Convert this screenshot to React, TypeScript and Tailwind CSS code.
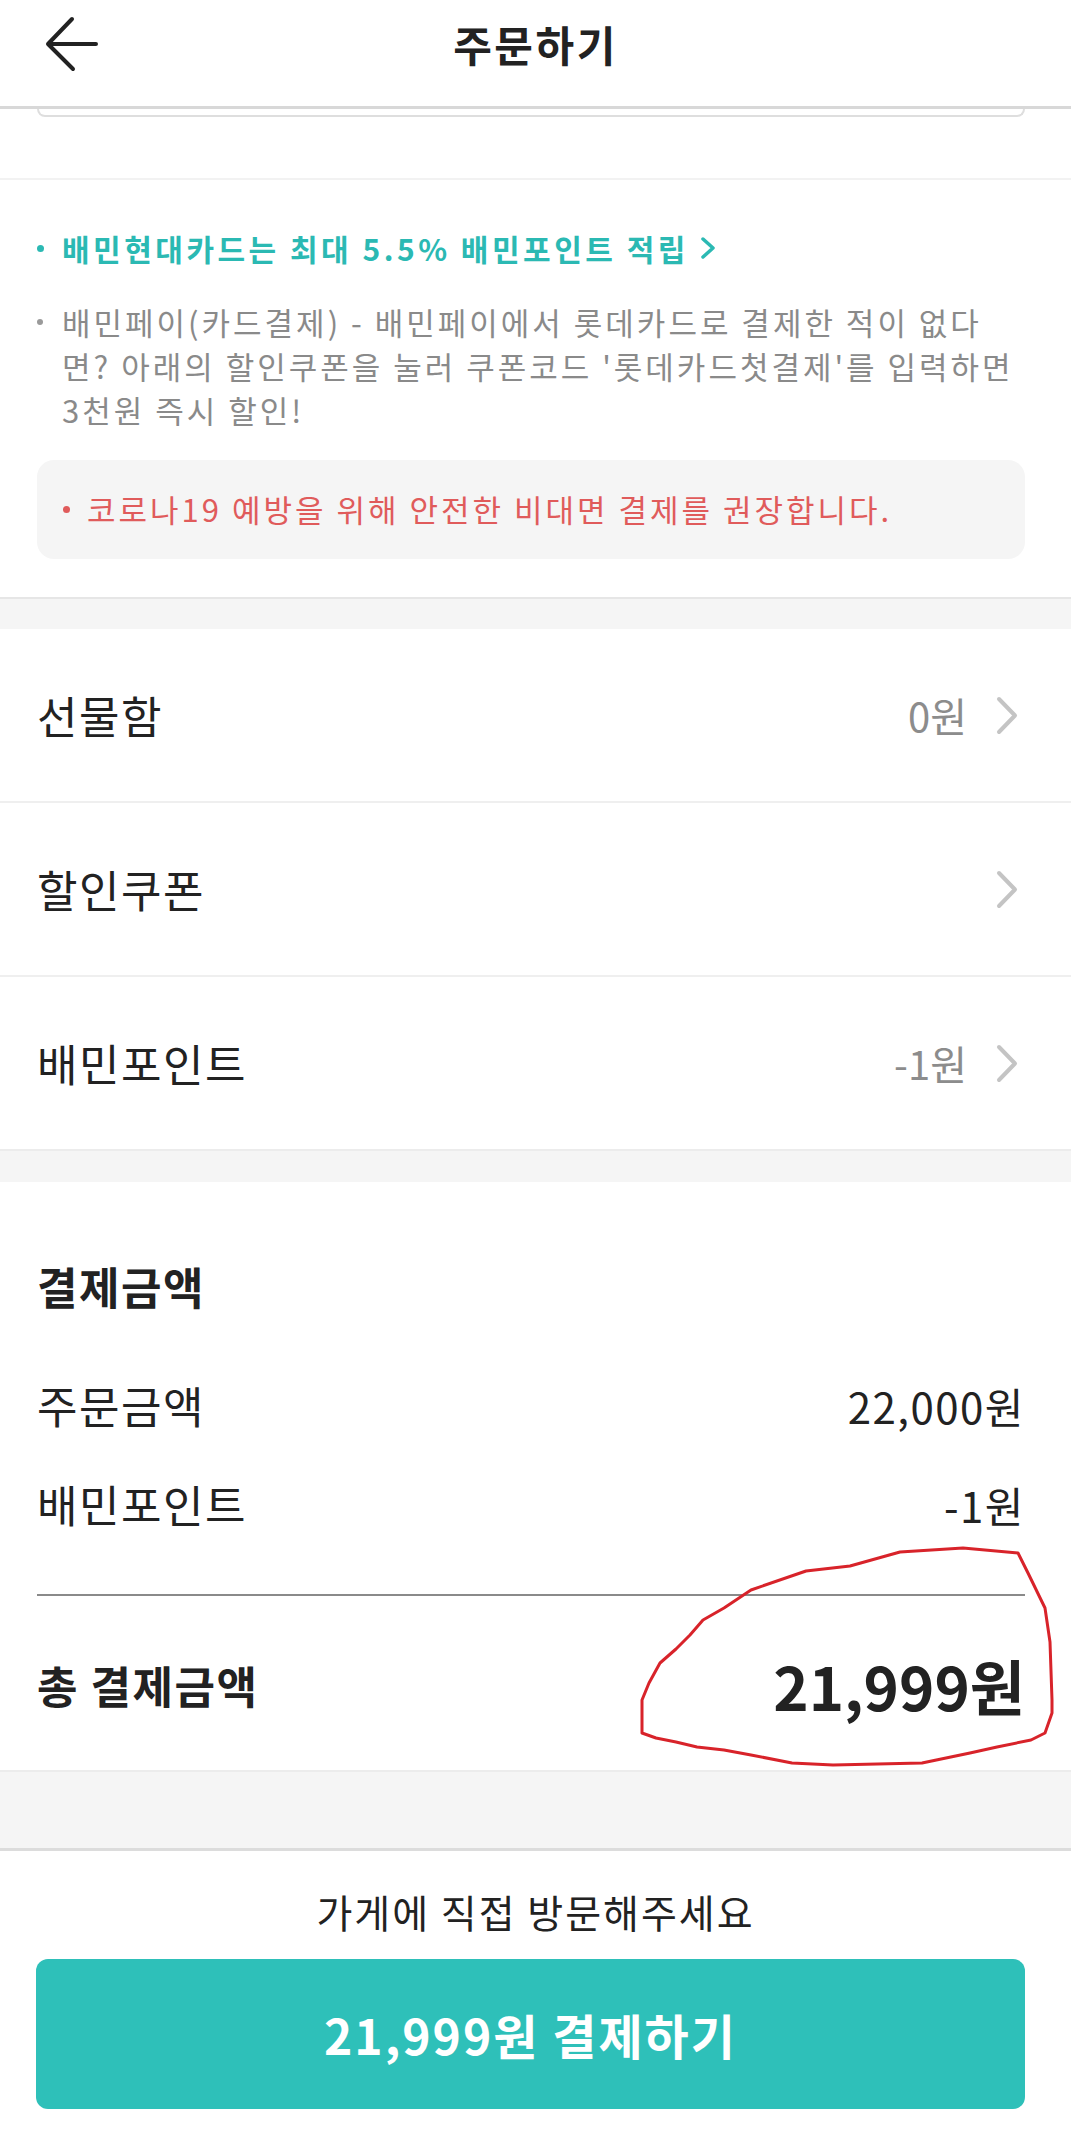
import * as React from "react";

const BackArrow = () => (
  <svg width="56" height="56" viewBox="0 0 56 56" fill="none">
    <path
      d="M4 28 H52 M28 3 L4 28 L29 53"
      stroke="#222"
      strokeWidth="4"
      strokeLinecap="round"
      strokeLinejoin="round"
    />
  </svg>
);

const Chevron = ({ color = "#c4c4c4", w = 24, h = 41, sw = 4 }) => (
  <svg width={w} height={h} viewBox={`0 0 ${w} ${h}`} fill="none">
    <path
      d={`M4 4 L${w - 4} ${h / 2} L4 ${h - 4}`}
      stroke={color}
      strokeWidth={sw}
      strokeLinecap="round"
      strokeLinejoin="round"
    />
  </svg>
);

const rows = [
  { label: "선물함", value: "0원" },
  { label: "할인쿠폰", value: "" },
  { label: "배민포인트", value: "-1원" },
];

const App = () => {
  return (
    <div className="relative w-full min-h-[2145px] bg-white text-[#222] font-['Noto_Sans_CJK_KR','Noto_Sans',sans-serif]">
      {/* header */}
      <header className="h-[109px] border-b-[3px] border-[#d8d8d8] grid grid-cols-[1fr_auto_1fr] items-center pb-[18px]">
        <div className="pl-[44px] flex items-center">
          <BackArrow />
        </div>
        <h1 className="text-[42px] font-bold tracking-[2.5px] leading-none">주문하기</h1>
        <div />
      </header>

      {/* bottom of the scrolled card */}
      <section className="h-[71px] border-b-2 border-[#f2f2f2] pl-[37px] pr-[46px]">
        <div className="h-[8px] border-2 border-t-0 border-[#dedede] rounded-b-[8px]" />
      </section>

      {/* card benefits */}
      <section className="pt-[46px] pb-[38px] pl-[37px] pr-[46px]">
        <div className="flex items-center h-[44px] text-[30px] font-bold tracking-[3.5px] text-[#2bb9b3]">
          <span className="w-[7px] h-[7px] rounded-full bg-[#2bb9b3] mr-[18px]" />
          <span>배민현대카드는 최대 5.5% 배민포인트 적립</span>
          <span className="ml-[10px] flex items-center">
            <Chevron color="#2bb9b3" w={18} h={26} sw={3.5} />
          </span>
        </div>
        <div className="mt-[30px] flex items-start text-[31px] leading-[44px] tracking-[3px] text-[#8a8a8a]">
          <span className="w-[6px] h-[6px] rounded-full bg-[#9a9a9a] mt-[19px] mr-[19px] shrink-0" />
          <p className="whitespace-nowrap">
            배민페이(카드결제) - 배민페이에서 롯데카드로 결제한 적이 없다
            <br />
            면? 아래의 할인쿠폰을 눌러 쿠폰코드 '롯데카드첫결제'를 입력하면
            <br />
            3천원 즉시 할인!
          </p>
        </div>
        <div className="mt-[28px] h-[99px] rounded-[17px] bg-[#f5f5f5] flex items-center pl-[26px]">
          <span className="w-[7px] h-[7px] rounded-full bg-[#e05b5b] mr-[17px]" />
          <span className="text-[31px] tracking-[3px] text-[#e05b5b]">
            코로나19 예방을 위해 안전한 비대면 결제를 권장합니다.
          </span>
        </div>
      </section>

      <div className="h-[32px] bg-[#f5f5f5] border-t-2 border-[#e6e6e6]" />

      {/* gift box / coupon / points */}
      <section>
        {rows.map((r, i) => (
          <div
            key={r.label}
            className={
              i < 2
                ? "h-[174px] border-b-2 border-[#efefef] flex items-center justify-between pl-[37px] pr-[52px]"
                : "h-[172px] flex items-center justify-between pl-[37px] pr-[52px]"
            }
          >
            <span className="text-[44px] tracking-[1.5px]">{r.label}</span>
            <div className="flex items-center gap-[28px]">
              {r.value && <span className="text-[40px] text-[#8c8c8c]">{r.value}</span>}
              <Chevron />
            </div>
          </div>
        ))}
      </section>

      <div className="h-[33px] bg-[#f5f5f5] border-t-2 border-[#ececec]" />

      {/* payment amount */}
      <section className="pt-[80px] pb-[50px] pl-[37px] pr-[46px]">
        <h2 className="h-[48px] leading-[48px] text-[44px] font-bold tracking-[1.5px]">결제금액</h2>
        <div className="mt-[71px] h-[48px] flex items-center justify-between text-[44px] tracking-[1.5px]">
          <span>주문금액</span>
          <span className="text-[42px]">22,000원</span>
        </div>
        <div className="mt-[51px] h-[48px] flex items-center justify-between text-[44px] tracking-[1.5px]">
          <span>배민포인트</span>
          <span className="text-[42px]">-1원</span>
        </div>
        <div className="mt-[66px] h-[2px] bg-[#8a8a8a]" />
        <div className="mt-[54px] h-[70px] flex items-center justify-between">
          <span className="text-[44px] font-bold tracking-[1.5px]">총 결제금액</span>
          <span className="text-[60px] font-bold">21,999원</span>
        </div>
      </section>

      <div className="h-[81px] bg-[#f5f5f5] border-t-2 border-[#ececec] border-b-[3px] border-b-[#dcdcdc]" />

      {/* bottom bar */}
      <section className="pt-[36px]">
        <p className="h-[48px] leading-[48px] text-center text-[39px] tracking-[2px] text-[#222]">
          가게에 직접 방문해주세요
        </p>
        <button className="mt-[24px] ml-[36px] mr-[46px] w-[989px] h-[150px] rounded-[12px] bg-[#2ec0b9] text-white text-[48px] font-bold tracking-[2px] flex items-center justify-center">
          21,999원 결제하기
        </button>
      </section>

      {/* red hand-drawn annotation */}
      <svg
        className="absolute top-0 left-0 pointer-events-none"
        width="1071"
        height="2145"
        viewBox="0 0 1071 2145"
        fill="none"
      >
        <path
          d="M1018 1553 L963 1548 L900 1552 L850 1566 L806 1571 L751 1590 L724 1608 L703 1620 L690 1635 L676 1649 L660 1663 L649 1683 L642 1700 L642 1733 L656 1738 L676 1742 L697 1747 L724 1750 L751 1755 L792 1763 L833 1765 L922 1763 L970 1753 L997 1747 L1031 1740 L1045 1733 L1052 1713 L1052 1700 L1050 1642 L1045 1608 L1028 1573 Z"
          stroke="#d8232a"
          strokeWidth="3"
          strokeLinejoin="round"
        />
      </svg>
    </div>
  );
};

export default App;
